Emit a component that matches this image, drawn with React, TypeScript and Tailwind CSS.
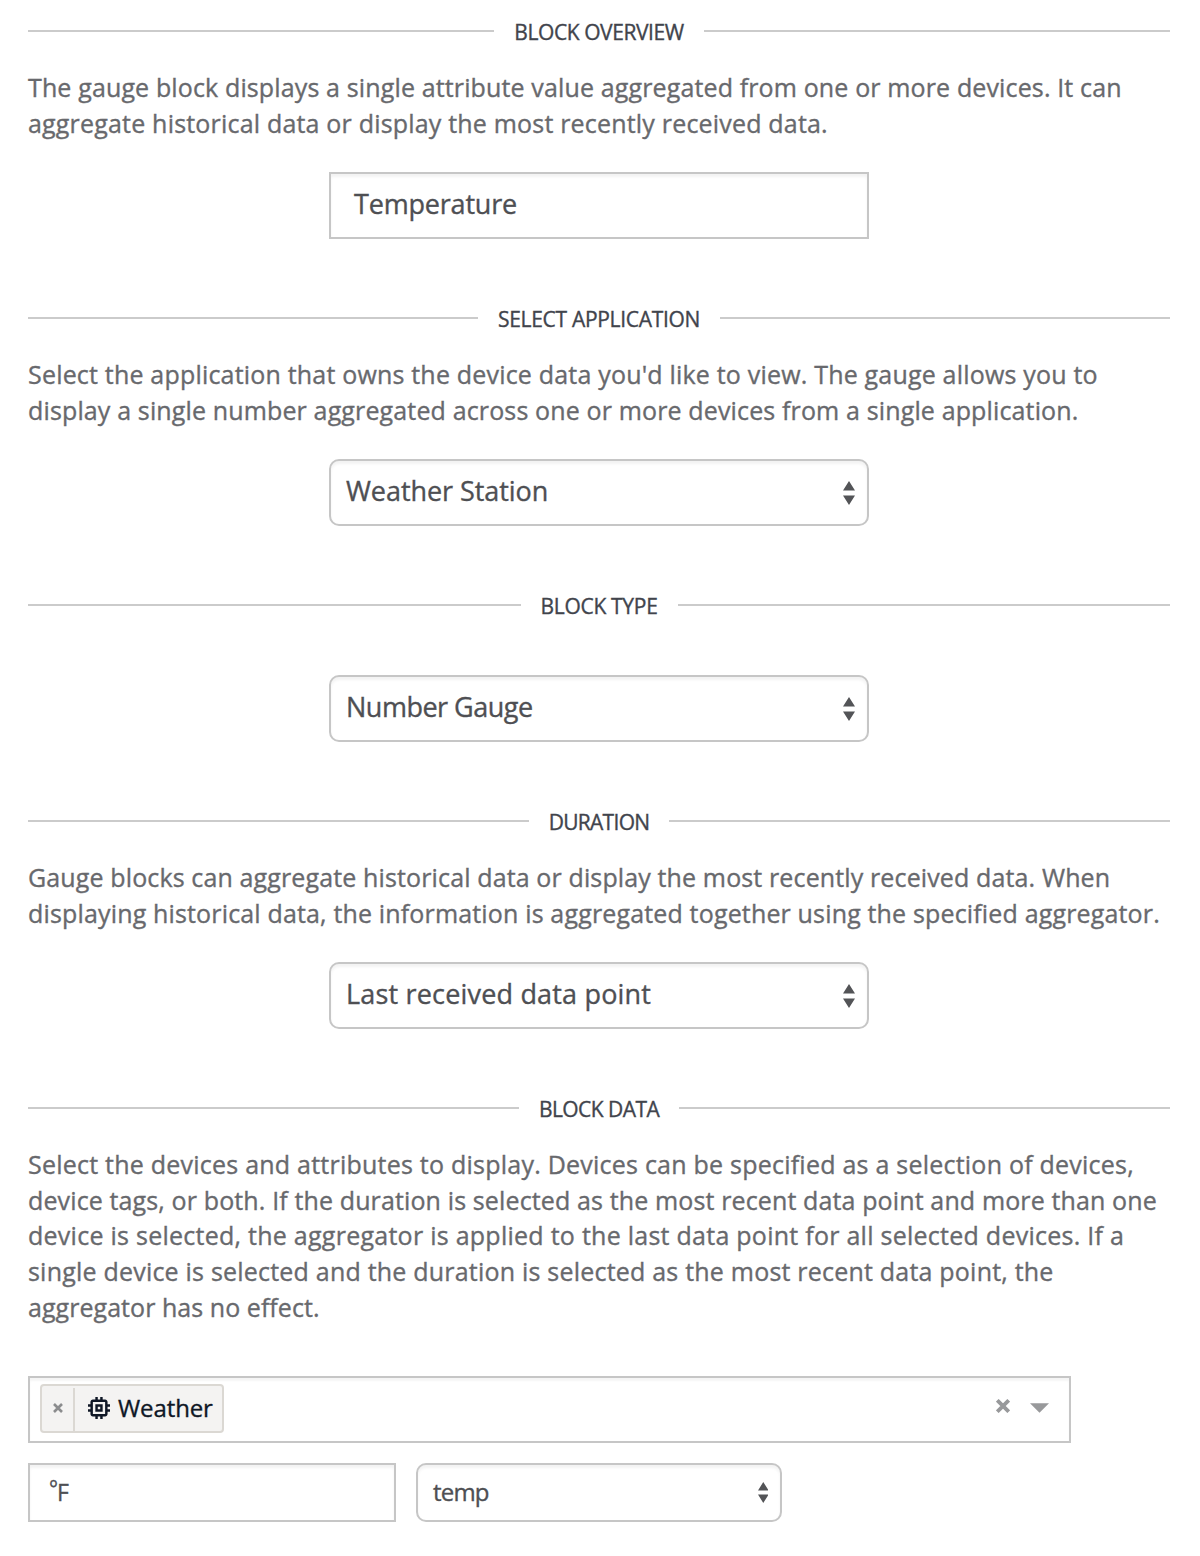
import type { ReactNode } from "react";

function Heading({ children, tracking }: { children: string; tracking: string }) {
  return (
    <div className="flex h-10 items-center">
      <div className="mb-[2px] h-[2px] flex-1 bg-[#cbcbcb]" />
      <h2 className={`mr-5 ml-5 text-[21px] leading-10 whitespace-nowrap text-[#41444c] ${tracking}`}>
        {children}
      </h2>
      <div className="mb-[2px] h-[2px] flex-1 bg-[#cbcbcb]" />
    </div>
  );
}

function Copy({ lines }: { lines: [string, string][] }) {
  return (
    <p className="mt-[18px] text-[25px] leading-[35.7px] text-[#68696d]">
      {lines.map(([text, tracking]) => (
        <span key={text} className={`block whitespace-nowrap ${tracking}`}>
          {text}
        </span>
      ))}
    </p>
  );
}

function Arrows({ className }: { className: string }) {
  return (
    <svg viewBox="0 0 12 24" className={className} fill="#535457">
      <path d="M6 0L12 9.6H0zM6 24L12 14.4H0z" />
    </svg>
  );
}

function Select({ children }: { children: ReactNode }) {
  return (
    <div className="mx-auto flex h-[67px] w-[540px] items-center justify-between rounded-[10px] border-2 border-[#c6c6c6] pr-3 pl-[15px] text-[27px] text-[#4e4f53] shadow-[inset_0_3px_3px_rgba(0,0,0,0.05)]">
      <div className="pb-[2px] whitespace-nowrap">{children}</div>
      <Arrows className="h-6 w-3" />
    </div>
  );
}

export default function App() {
  return (
    <main className="h-[1556px] w-[1200px] bg-white pt-3 pr-[30px] pl-7 font-['Open_Sans',sans-serif] [-webkit-text-stroke:0.35px_currentColor]">
      <section className="h-[287px]">
        <Heading tracking="tracking-[-0.42px]">BLOCK OVERVIEW</Heading>
        <Copy
          lines={[
            ["The gauge block displays a single attribute value aggregated from one or more devices. It can", "tracking-[0.135px]"],
            ["aggregate historical data or display the most recently received data.", "tracking-[0.19px]"],
          ]}
        />
        <div className="mx-auto mt-[30.6px] flex h-[67px] w-[540px] items-center border-2 border-[#c6c6c6] pb-[2px] pl-[23px] text-[27px] tracking-[-0.19px] text-[#4e4f53] shadow-[inset_0_3px_3px_rgba(0,0,0,0.05)]">
          Temperature
        </div>
      </section>

      <section className="h-[287px]">
        <Heading tracking="tracking-[-0.3px]">SELECT APPLICATION</Heading>
        <Copy
          lines={[
            ["Select the application that owns the device data you'd like to view. The gauge allows you to", "tracking-[0.19px]"],
            ["display a single number aggregated across one or more devices from a single application.", "tracking-[0.14px]"],
          ]}
        />
        <div className="mt-[30.6px]">
          <Select>
            <span className="tracking-[-0.06px]">Weather Station</span>
          </Select>
        </div>
      </section>

      <section className="h-[216px]">
        <Heading tracking="tracking-[-0.3px]">BLOCK TYPE</Heading>
        <div className="mt-[49px]">
          <Select>
            <span className="tracking-[-0.5px]">Number Gauge</span>
          </Select>
        </div>
      </section>

      <section className="h-[287px]">
        <Heading tracking="tracking-[-0.7px]">DURATION</Heading>
        <Copy
          lines={[
            ["Gauge blocks can aggregate historical data or display the most recently received data. When", "tracking-[0.13px]"],
            ["displaying historical data, the information is aggregated together using the specified aggregator.", "tracking-[0.16px]"],
          ]}
        />
        <div className="mt-[30.6px]">
          <Select>
            <span className="tracking-[0.18px]">Last received data point</span>
          </Select>
        </div>
      </section>

      <section>
        <Heading tracking="tracking-[-0.55px]">BLOCK DATA</Heading>
        <Copy
          lines={[
            ["Select the devices and attributes to display. Devices can be specified as a selection of devices,", "tracking-[0.23px]"],
            ["device tags, or both. If the duration is selected as the most recent data point and more than one", "tracking-[0.13px]"],
            ["device is selected, the aggregator is applied to the last data point for all selected devices. If a", "tracking-[0.26px]"],
            ["single device is selected and the duration is selected as the most recent data point, the", "tracking-[0.21px]"],
            ["aggregator has no effect.", "tracking-[0.05px]"],
          ]}
        />

        <div className="mt-[50.5px] flex h-[67px] w-[1043px] justify-between border-2 border-[#c6c6c6] pl-[10px] shadow-[inset_0_3px_2px_rgba(0,0,0,0.04)]">
          <div className="mt-[6px] flex h-[49px] w-[184px] items-center rounded-[4px] border-2 border-[#dbd8d3] bg-[#f4f3f2]">
            <svg viewBox="0 0 10 10" className="mb-px ml-[11px] h-[10px] w-[10px]" stroke="#8b8c8e" strokeWidth="2.6">
              <path d="M1 1l8 8M9 1l-8 8" />
            </svg>
            <div className="mt-[2px] ml-[10px] h-[43px] w-[2px] bg-[#dbd8d3]" />
            <svg viewBox="3 3 18 18" className="mb-[2px] ml-[13px] h-[22px] w-[22px]" fill="#0f1726">
              <path d="M15 9H9v6h6V9zm-2 4h-2v-2h2v2zm8-2V9h-2V7c0-1.1-.9-2-2-2h-2V3h-2v2h-2V3H9v2H7c-1.1 0-2 .9-2 2v2H3v2h2v2H3v2h2v2c0 1.1.9 2 2 2h2v2h2v-2h2v2h2v-2h2c1.1 0 2-.9 2-2v-2h2v-2h-2v-2h2zm-4 6H7V7h10v10z" />
            </svg>
            <span className="mb-[2px] ml-[8px] text-[24px] tracking-[-0.1px] text-[#0f1726]">Weather</span>
          </div>
          <div className="mt-[-7px] mr-5 flex items-center gap-5">
            <svg viewBox="0 0 14 14" className="h-[14px] w-[14px]" stroke="#98999b" strokeWidth="3.8">
              <path d="M1.3 1.3l11.4 11.4M12.7 1.3L1.3 12.7" />
            </svg>
            <svg viewBox="0 0 20 10" className="mt-[4px] h-[10px] w-[19px]" fill="#98999b">
              <path d="M0 0h20L10 10z" />
            </svg>
          </div>
        </div>

        <div className="mt-5 flex gap-5 text-[24px] text-[#4e4f53]">
          <div className="flex h-[59px] w-[368px] items-center border-2 border-[#c6c6c6] pl-[19px] shadow-[inset_0_3px_3px_rgba(0,0,0,0.05)]">
            <span className="mb-2 text-[21px] tracking-[-1px]">°</span>
            <span className="mb-px text-[23px]">F</span>
          </div>
          <div className="flex h-[59px] w-[366px] items-center justify-between rounded-[10px] border-2 border-[#c6c6c6] pr-[12px] pl-[15px] shadow-[inset_0_3px_3px_rgba(0,0,0,0.05)]">
            <span className="pb-[2px] tracking-[-0.8px]">temp</span>
            <Arrows className="h-[21px] w-[10.5px]" />
          </div>
        </div>
      </section>
    </main>
  );
}
